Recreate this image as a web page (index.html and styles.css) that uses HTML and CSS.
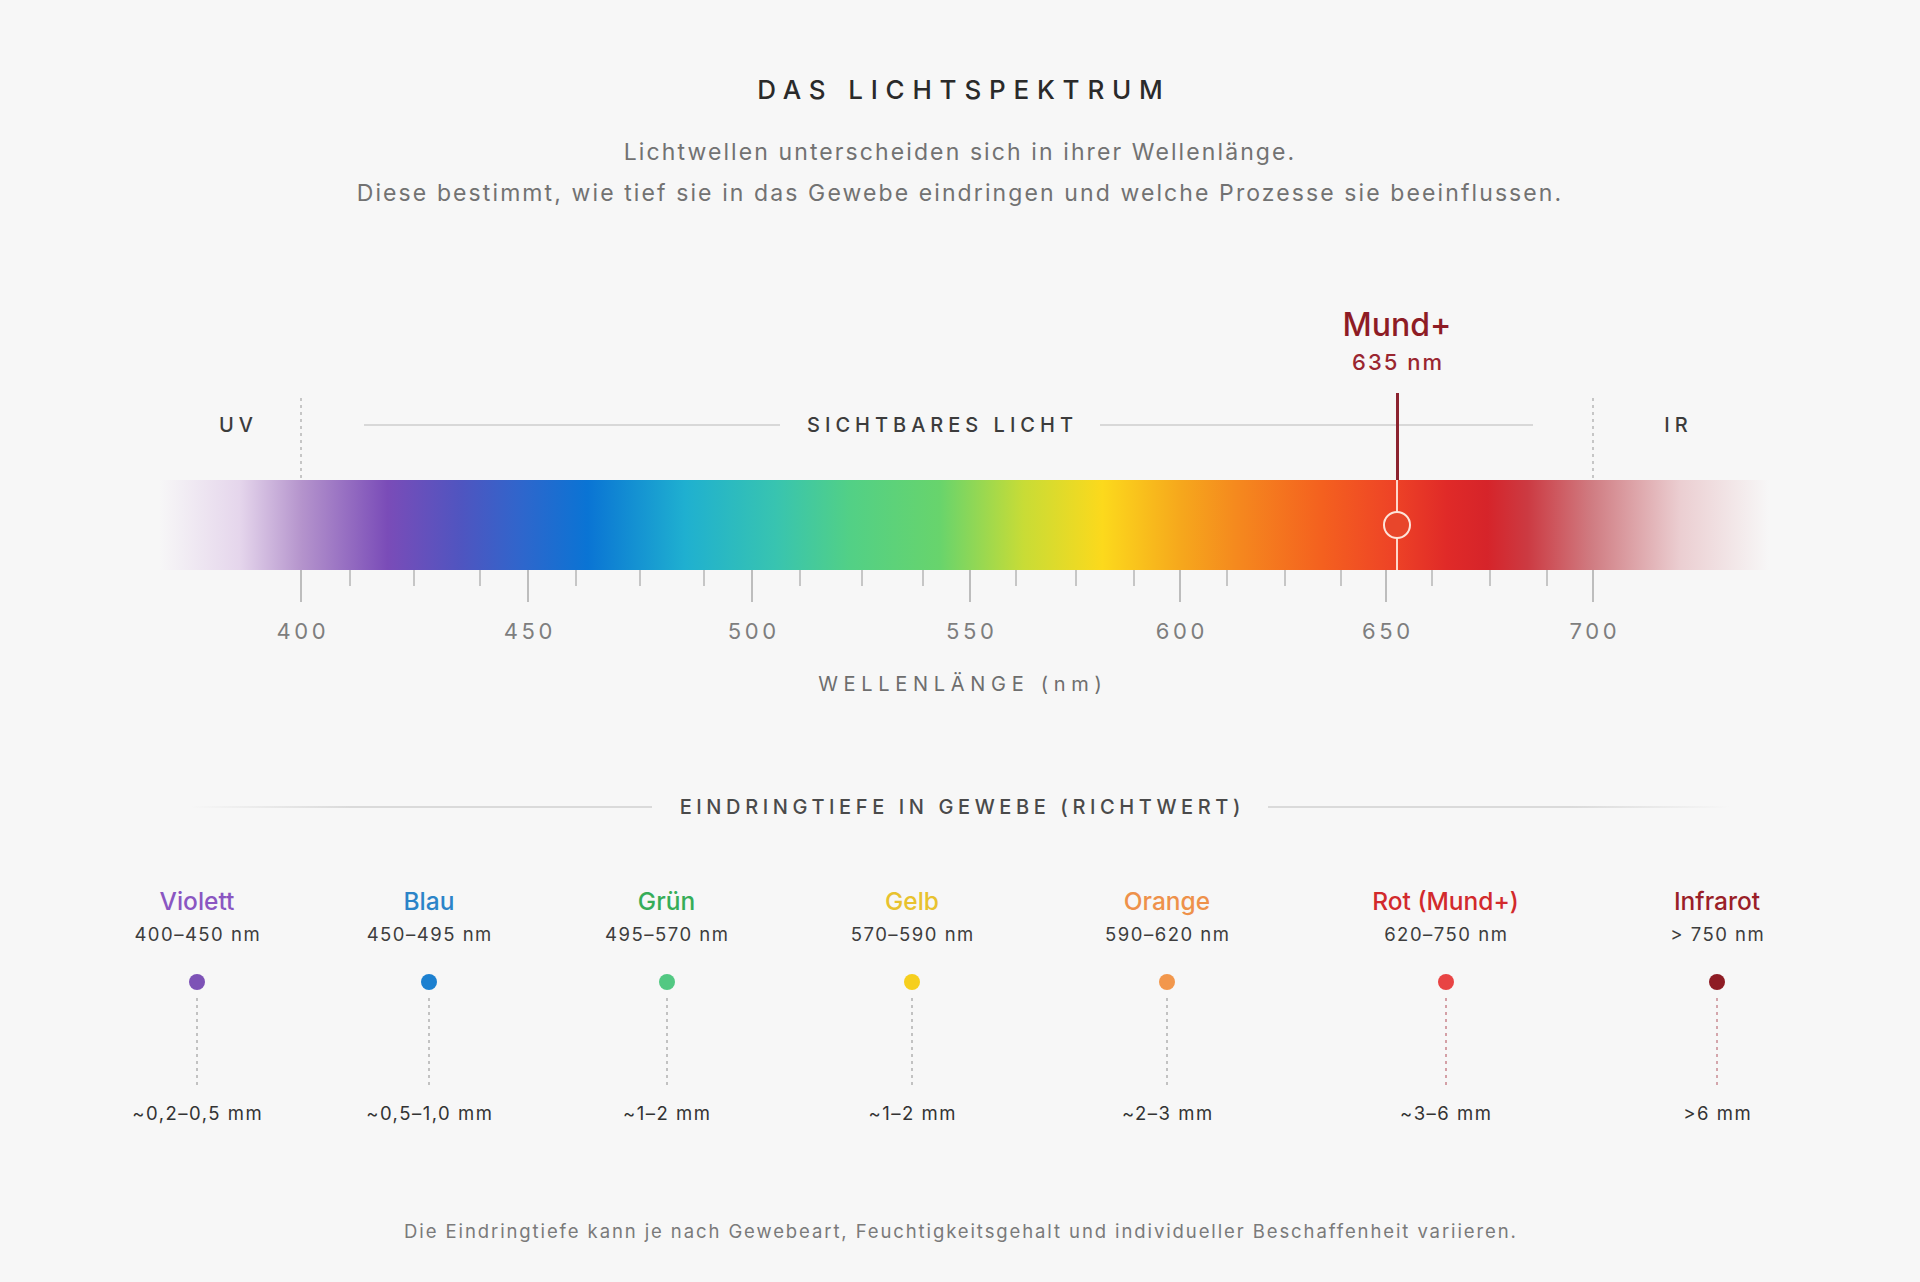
FILE: index.html
```html
<!DOCTYPE html>
<html lang="de">
<head>
<meta charset="utf-8">
<title>Das Lichtspektrum</title>
<link rel="stylesheet" href="styles.css">
</head>
<body>
<main class="page">
  <header class="intro">
    <h1 class="title">DAS LICHTSPEKTRUM</h1>
    <p class="lead">Lichtwellen unterscheiden sich in ihrer Wellenlänge.<br>Diese bestimmt, wie tief sie in das Gewebe eindringen und welche Prozesse sie beeinflussen.</p>
  </header>

  <section class="chart">
    <div class="marker-label" style="left:1397px">
      <div class="marker-name">Mund+</div>
      <div class="marker-nm">635 nm</div>
    </div>
    <span class="marker-stem" style="left:1397px"></span>

    <span class="boundary" style="left:301px"></span>
    <span class="boundary" style="left:1593px"></span>
    <span class="band-label" style="left:236px">UV</span>
    <span class="band-line" style="left:364px;width:416px"></span>
    <span class="band-label" style="left:940px">SICHTBARES LICHT</span>
    <span class="band-line" style="left:1100px;width:433px"></span>
    <span class="band-label" style="left:1676px">IR</span>

    <div class="spectrum"></div>
    <span class="marker-inner" style="left:1397px"></span>
    <span class="marker-ring" style="left:1397px"></span>

    <span class="tick major" style="left:301px"></span>
    <span class="tick" style="left:350px"></span>
    <span class="tick" style="left:414px"></span>
    <span class="tick" style="left:480px"></span>
    <span class="tick major" style="left:528px"></span>
    <span class="tick" style="left:576px"></span>
    <span class="tick" style="left:640px"></span>
    <span class="tick" style="left:704px"></span>
    <span class="tick major" style="left:752px"></span>
    <span class="tick" style="left:800px"></span>
    <span class="tick" style="left:862px"></span>
    <span class="tick" style="left:923px"></span>
    <span class="tick major" style="left:970px"></span>
    <span class="tick" style="left:1016px"></span>
    <span class="tick" style="left:1076px"></span>
    <span class="tick" style="left:1134px"></span>
    <span class="tick major" style="left:1180px"></span>
    <span class="tick" style="left:1227px"></span>
    <span class="tick" style="left:1285px"></span>
    <span class="tick" style="left:1341px"></span>
    <span class="tick major" style="left:1386px"></span>
    <span class="tick" style="left:1432px"></span>
    <span class="tick" style="left:1490px"></span>
    <span class="tick" style="left:1547px"></span>
    <span class="tick major" style="left:1593px"></span>

    <span class="tick-label" style="left:301px">400</span>
    <span class="tick-label" style="left:528px">450</span>
    <span class="tick-label" style="left:752px">500</span>
    <span class="tick-label" style="left:970px">550</span>
    <span class="tick-label" style="left:1180px">600</span>
    <span class="tick-label" style="left:1386px">650</span>
    <span class="tick-label" style="left:1593px">700</span>
  </section>

  <div class="axis-title">WELLENLÄNGE (nm)</div>

  <section class="depth">
    <div class="depth-head">
      <span class="rule rule-left"></span>
      <h2 class="depth-title">EINDRINGTIEFE IN GEWEBE (RICHTWERT)</h2>
      <span class="rule rule-right"></span>
    </div>

    <div class="depth-grid">
      <div class="band violet">
        <div class="band-name">Violett</div>
        <div class="band-range">400–450 nm</div>
        <span class="dot"></span>
        <span class="drop"></span>
        <div class="band-depth">~0,2–0,5 mm</div>
      </div>
      <div class="band blue">
        <div class="band-name">Blau</div>
        <div class="band-range">450–495 nm</div>
        <span class="dot"></span>
        <span class="drop"></span>
        <div class="band-depth">~0,5–1,0 mm</div>
      </div>
      <div class="band green">
        <div class="band-name">Grün</div>
        <div class="band-range">495–570 nm</div>
        <span class="dot"></span>
        <span class="drop"></span>
        <div class="band-depth">~1–2 mm</div>
      </div>
      <div class="band yellow">
        <div class="band-name">Gelb</div>
        <div class="band-range">570–590 nm</div>
        <span class="dot"></span>
        <span class="drop"></span>
        <div class="band-depth">~1–2 mm</div>
      </div>
      <div class="band orange">
        <div class="band-name">Orange</div>
        <div class="band-range">590–620 nm</div>
        <span class="dot"></span>
        <span class="drop"></span>
        <div class="band-depth">~2–3 mm</div>
      </div>
      <div class="band red">
        <div class="band-name">Rot (Mund+)</div>
        <div class="band-range">620–750 nm</div>
        <span class="dot"></span>
        <span class="drop"></span>
        <div class="band-depth">~3–6 mm</div>
      </div>
      <div class="band infra">
        <div class="band-name">Infrarot</div>
        <div class="band-range">&gt; 750 nm</div>
        <span class="dot"></span>
        <span class="drop"></span>
        <div class="band-depth">&gt;6 mm</div>
      </div>
    </div>
  </section>

  <p class="note">Die Eindringtiefe kann je nach Gewebeart, Feuchtigkeitsgehalt und individueller Beschaffenheit variieren.</p>
</main>
</body>
</html>
```

FILE: styles.css
```css
* { box-sizing: border-box; }

html, body {
  margin: 0;
  padding: 0;
  background: #f7f7f7;
}

body {
  font-family: "Inter", "Noto Sans", "Liberation Sans", sans-serif;
  color: #333;
  min-height: 100vh;
}

.page {
  width: 1920px;
  padding-top: 74px;
  padding-bottom: 30px;
}

/* Intro */
.intro { text-align: center; }

.title {
  margin: 0;
  font-size: 26px;
  line-height: 32px;
  font-weight: 500;
  letter-spacing: 7.8px;
  padding-left: 7.8px;
  color: #2a2a2a;
}

.lead {
  margin: 26px 0 0;
  font-size: 23px;
  line-height: 41px;
  letter-spacing: 2.1px;
  color: #727272;
}

/* Chart canvas */
.chart {
  position: relative;
  height: 370px;
  margin-top: 66px;
}

.marker-label {
  position: absolute;
  top: 26px;
  transform: translateX(-50%);
  text-align: center;
  white-space: nowrap;
}

.marker-name {
  font-size: 32px;
  line-height: 38px;
  font-weight: 500;
  color: #8e1c25;
}

.marker-nm {
  margin-top: 5px;
  font-size: 22px;
  line-height: 26px;
  font-weight: 500;
  letter-spacing: 2px;
  padding-left: 2px;
  color: #9a2630;
}

.marker-stem {
  position: absolute;
  top: 113px;
  width: 3px;
  height: 87px;
  margin-left: -1.5px;
  background: #8c2330;
  z-index: 3;
}

.boundary {
  position: absolute;
  top: 118px;
  width: 2px;
  height: 172px;
  margin-left: -1px;
  background: repeating-linear-gradient(to bottom, #c6c6c6 0 3px, transparent 3px 7px);
}

.band-label {
  position: absolute;
  top: 133px;
  transform: translateX(-50%);
  font-size: 20px;
  line-height: 24px;
  font-weight: 500;
  letter-spacing: 5px;
  padding-left: 5px;
  color: #3c3c3c;
  white-space: nowrap;
}

.band-line {
  position: absolute;
  top: 144px;
  height: 2px;
  background: #d8d8d8;
}

.spectrum {
  position: absolute;
  top: 200px;
  left: 159px;
  width: 1610px;
  height: 90px;
  background: linear-gradient(90deg,
    rgba(226, 208, 234, 0) 0%,
    rgba(226, 208, 234, 0.85) 5%,
    #b493cc 8.9%,
    #7a4cb8 14.2%,
    #4f55c0 18.8%,
    #2f66cc 22.5%,
    #0a74d4 26.6%,
    #1fb0d0 32.7%,
    #38c4b0 38.3%,
    #52d086 42.9%,
    #68d46c 48.5%,
    #c8dc36 53.7%,
    #fcd91c 58.6%,
    #f6a81c 63.4%,
    #f58a1e 66.8%,
    #f4601f 72.3%,
    #ee4426 76.5%,
    #e02a28 80%,
    #d6242a 82.5%,
    #cc3a42 85%,
    #d07c82 89%,
    rgba(232, 196, 200, 0.8) 94.5%,
    rgba(240, 225, 228, 0) 100%);
  z-index: 1;
}

.marker-inner {
  position: absolute;
  top: 200px;
  width: 2px;
  height: 90px;
  margin-left: -1px;
  background: rgba(255, 232, 222, 0.9);
  z-index: 2;
}

.marker-ring {
  position: absolute;
  top: 231px;
  width: 28px;
  height: 28px;
  margin-left: -14px;
  border: 2px solid #fde4da;
  border-radius: 50%;
  background: #e8462b;
  z-index: 3;
}

.tick {
  position: absolute;
  top: 290px;
  width: 1.5px;
  height: 16px;
  margin-left: -0.75px;
  background: #c6c6c6;
}

.tick.major {
  height: 32px;
  background: #bdbdbd;
}

.tick-label {
  position: absolute;
  top: 338px;
  transform: translateX(-50%);
  font-size: 22px;
  line-height: 26px;
  letter-spacing: 3.6px;
  padding-left: 3.6px;
  color: #7e7e7e;
}

.axis-title {
  margin-top: 21px;
  text-align: center;
  font-size: 20px;
  line-height: 26px;
  letter-spacing: 5.7px;
  padding-left: 5.7px;
  color: #6e6e6e;
}

/* Penetration depth */
.depth-head {
  display: flex;
  align-items: center;
  gap: 23px;
  width: 1540px;
  margin: 97px auto 0;
}

.rule {
  flex: 1;
  height: 1.5px;
}

.rule-left { background: linear-gradient(90deg, rgba(215, 215, 215, 0), #dadada 35%); }
.rule-right { background: linear-gradient(90deg, #dadada 65%, rgba(215, 215, 215, 0)); }

.depth-title {
  margin: 0;
  font-size: 20px;
  line-height: 26px;
  font-weight: 500;
  letter-spacing: 4.6px;
  padding-left: 4.6px;
  color: #4a4a4a;
  white-space: nowrap;
}

.depth-grid {
  display: grid;
  grid-template-columns: 232px 232px 243px 248px 262px 295px 248px;
  margin: 66px 0 0 81px;
}

.band {
  display: flex;
  flex-direction: column;
  align-items: center;
}

.band-name {
  font-size: 24.5px;
  line-height: 30px;
  font-weight: 500;
  white-space: nowrap;
}

.band-range,
.band-depth {
  font-size: 18.5px;
  line-height: 24px;
  letter-spacing: 1.5px;
  padding-left: 1.5px;
  color: #3d3d3d;
  white-space: nowrap;
}

.band-range { margin-top: 6px; }

.dot {
  width: 16px;
  height: 16px;
  margin-top: 28px;
  border-radius: 50%;
}

.drop {
  width: 2px;
  height: 87px;
  margin-top: 8px;
  background: repeating-linear-gradient(to bottom, #c2c2c2 0 3px, transparent 3px 7px);
}

.band-depth { margin-top: 16px; color: #333; }

.violet .band-name { color: #8a56c2; }
.violet .dot { background: #7d52b6; }
.blue .band-name { color: #2b84c8; }
.blue .dot { background: #1c80d0; }
.green .band-name { color: #36ad58; }
.green .dot { background: #52c882; }
.yellow .band-name { color: #e8c22e; }
.yellow .dot { background: #f6cf1e; }
.orange .band-name { color: #ee914a; }
.orange .dot { background: #f2974c; }
.red .band-name { color: #d22a2c; }
.red .dot { background: #e84444; }
.red .drop { background: repeating-linear-gradient(to bottom, #d4a0a6 0 3px, transparent 3px 7px); }
.infra .band-name { color: #9a1f28; }
.infra .dot { background: #8e1c24; }
.infra .drop { background: repeating-linear-gradient(to bottom, #d4a6ac 0 3px, transparent 3px 7px); }

.note {
  margin: 94px 0 0;
  text-align: center;
  font-size: 18.5px;
  line-height: 24px;
  letter-spacing: 1.9px;
  padding-left: 1.9px;
  color: #7a7a7a;
}
```
